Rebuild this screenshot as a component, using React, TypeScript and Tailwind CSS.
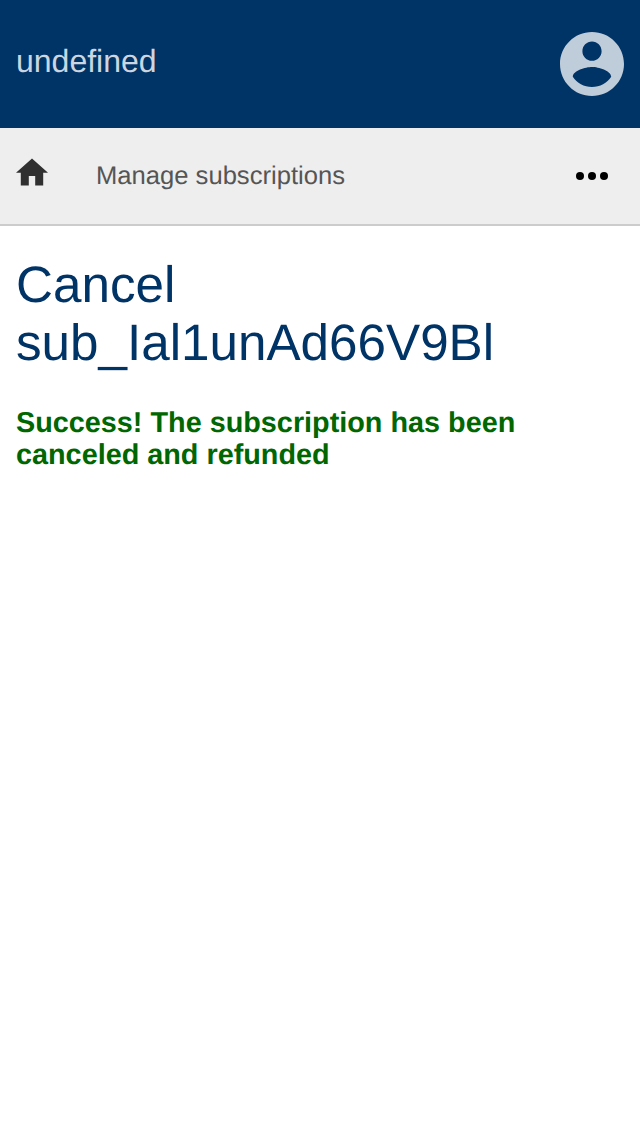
export default function App() {
  return (
    <div className="min-h-screen bg-white font-['Liberation_Sans',Arial,sans-serif] [text-rendering:geometricPrecision]">
      <header className="flex h-32 items-center justify-between bg-[#003366] px-4">
        <span className="mb-1.5 text-[32px] leading-9 text-[#ccd6e0]">undefined</span>
        <svg className="size-16 text-[#bfccd9]" viewBox="2 2 20 20" fill="currentColor" aria-label="Account">
          <path d="M12 2C6.48 2 2 6.48 2 12s4.48 10 10 10 10-4.480 10-10S17.520 2 12 2zm0 3c1.660 0 3 1.340 3 3s-1.340 3-3 3-3-1.340-3-3 1.340-3 3-3zm0 14.200c-2.500 0-4.710-1.280-6-3.220.03-1.990 4-3.080 6-3.080 1.990 0 5.970 1.090 6 3.080-1.290 1.940-3.500 3.220-6 3.220z" />
        </svg>
      </header>
      <nav className="flex h-[98px] items-center border-b-2 border-[#cccccc] bg-[#eeeeee] pr-8 pl-4">
        <svg className="mb-2 h-7 w-8" viewBox="2 2.75 20 17.5" fill="#303030" aria-label="Home">
          <path d="M10 20v-6h4v6h5v-8h3L12 3 2 12h3v8z" />
        </svg>
        <span className="ml-12 flex-1 text-[25.6px] leading-8 text-[#555555]">Manage subscriptions</span>
        <svg className="h-2 w-8" viewBox="0 0 32 8" aria-label="More">
          <circle cx="4" cy="4" r="4" />
          <circle cx="16" cy="4" r="4" />
          <circle cx="28" cy="4" r="4" />
        </svg>
      </nav>
      <main className="px-4 pt-[30px]">
        <h1 className="text-[51.2px] leading-[58px] text-[#003366]">
          Cancel
          <br />
          sub_Ial1unAd66V9Bl
        </h1>
        <p className="mt-[35px] text-[28.8px] leading-8 font-bold text-[#006600]">
          Success! The subscription has been
          <br />
          canceled and refunded
        </p>
      </main>
    </div>
  );
}
